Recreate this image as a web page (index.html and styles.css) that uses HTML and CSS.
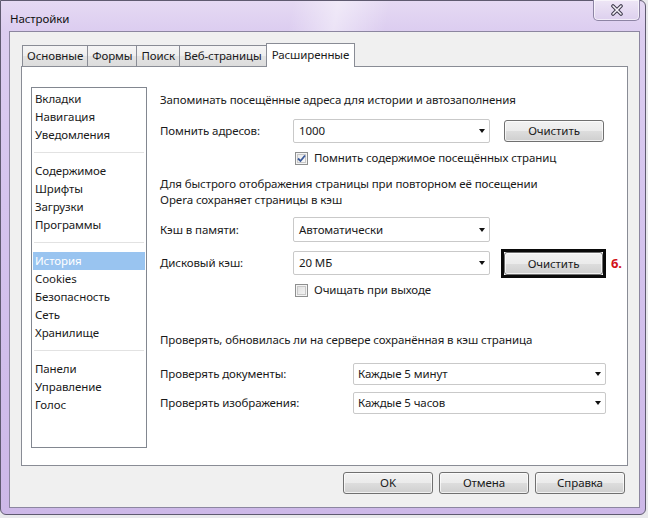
FILE: index.html
```html
<!DOCTYPE html>
<html lang="ru">
<head>
  <meta charset="UTF-8" />
  <meta name="viewport" content="width=device-width, initial-scale=1.0"/>
  <title>Настройки</title>
  <link rel="stylesheet" href="styles.css">
</head>
<body>
  <div class="window">
    <div class="titlebar">
      <span class="title">Настройки</span>
      <div class="close">
        <svg width="14" height="12" viewBox="0 0 14 12">
          <path d="M3 2 L11 10 M11 2 L3 10" stroke="#3e3a4c" stroke-width="3.6" stroke-linecap="round"/>
          <path d="M3 2 L11 10 M11 2 L3 10" stroke="#f6f3fa" stroke-width="1.6" stroke-linecap="round"/>
        </svg>
      </div>
    </div>

    <div class="client">
      <div class="tabs">
        <div class="tab">Основные</div>
        <div class="tab">Формы</div>
        <div class="tab">Поиск</div>
        <div class="tab">Веб-страницы</div>
        <div class="tab active">Расширенные</div>
      </div>

      <div class="panel">
        <ul class="nav">
          <li>Вкладки</li>
          <li>Навигация</li>
          <li>Уведомления</li>
          <li class="sep"></li>
          <li>Содержимое</li>
          <li>Шрифты</li>
          <li>Загрузки</li>
          <li>Программы</li>
          <li class="sep"></li>
          <li class="selected">История</li>
          <li>Cookies</li>
          <li>Безопасность</li>
          <li>Сеть</li>
          <li>Хранилище</li>
          <li class="sep"></li>
          <li>Панели</li>
          <li>Управление</li>
          <li>Голос</li>
        </ul>

        <div class="content">
          <div class="text">Запоминать посещённые адреса для истории и автозаполнения</div>

          <div class="row row-first">
            <div class="label">Помнить адресов:</div>
            <div class="combo"><span>1000</span><i class="arrow"></i></div>
            <div class="btn btn-side">Очистить</div>
          </div>

          <div class="check-row check-first">
            <span class="check checked">
              <svg width="9" height="9" viewBox="0 0 9 9"><path d="M1 4.5 L3.5 7 L8 1.5" fill="none" stroke="#3b5a9a" stroke-width="1.8"/></svg>
            </span>
            <span>Помнить содержимое посещённых страниц</span>
          </div>

          <div class="text text-cache">Для быстрого отображения страницы при повторном её посещении<br>Opera сохраняет страницы в кэш</div>

          <div class="row row-mem">
            <div class="label">Кэш в памяти:</div>
            <div class="combo"><span>Автоматически</span><i class="arrow"></i></div>
          </div>

          <div class="row row-disk">
            <div class="label">Дисковый кэш:</div>
            <div class="combo"><span>20 МБ</span><i class="arrow"></i></div>
            <div class="marker"><div class="btn">Очистить</div></div>
            <span class="mark">6.</span>
          </div>

          <div class="check-row check-exit">
            <span class="check"></span>
            <span>Очищать при выходе</span>
          </div>

          <div class="text text-check">Проверять, обновилась ли на сервере сохранённая в кэш страница</div>

          <div class="row wide row-docs">
            <div class="label">Проверять документы:</div>
            <div class="combo"><span>Каждые 5 минут</span><i class="arrow"></i></div>
          </div>

          <div class="row wide row-img">
            <div class="label">Проверять изображения:</div>
            <div class="combo"><span>Каждые 5 часов</span><i class="arrow"></i></div>
          </div>
        </div>
      </div>

      <div class="footer">
        <div class="btn">OK</div>
        <div class="btn">Отмена</div>
        <div class="btn">Справка</div>
      </div>
    </div>
  </div>
</body>
</html>
```

FILE: styles.css
```css
:root {
  --text-color: #1a1a1a;
  --face-color: #f0f0f0;
  --panel-border: #898c95;
  --combo-border: #c9c9c9;
  --select-bg: #99c4f0;
  --font-family: "Noto Sans", "Open Sans", sans-serif;
}

* {
  box-sizing: border-box;
}

html, body {
  margin: 0;
  padding: 0;
  background-color: #e9e9ec;
  color: var(--text-color);
  font-family: var(--font-family);
  font-size: 11.5px;
  letter-spacing: -0.1px;
  line-height: 16px;
}

.window {
  width: 646px;
  height: 515px;
  border: 1px solid #5f5a70;
  border-radius: 0 6px 6px 6px;
  padding: 0 5px 6px 8px;
  display: flex;
  flex-direction: column;
  background:
    linear-gradient(100deg, transparent 45%, rgba(255, 255, 255, 0.45) 52%, transparent 60%) no-repeat 0 0 / 100% 30px,
    linear-gradient(to bottom, #e5d9f3 0, #dccdf0 30px, #d5c4ee 200px, #cdb8e8 100%);
}

/* title bar */
.titlebar {
  height: 30px;
  display: flex;
  justify-content: space-between;
  align-items: flex-start;
}

.title {
  margin-top: 10px;
  padding-left: 1px;
  color: #111;
}

.close {
  width: 47px;
  height: 21px;
  margin-top: -1px;
  border: 1px solid #8d84a4;
  border-top: none;
  border-radius: 0 0 5px 5px;
  background: linear-gradient(to bottom, #eee6f6, #ddd0ee);
  box-shadow: inset 0 0 0 1px rgba(255, 255, 255, 0.6);
  display: flex;
  align-items: center;
  justify-content: center;
}

/* client area */
.client {
  flex: 1;
  background-color: var(--face-color);
  border: 1px solid #8c86a0;
  padding: 11px 11px 0 11px;
}

.tabs {
  display: flex;
  align-items: flex-end;
  height: 23px;
  padding-left: 1px;
}

.tab {
  height: 21px;
  padding: 0 4px;
  border: 1px solid var(--panel-border);
  border-bottom: none;
  margin-right: -1px;
  background: linear-gradient(to bottom, #f5f5f5 0, #eeeeee 50%, #e3e3e3 51%, #dcdcdc 100%);
  line-height: 20px;
  white-space: nowrap;
}

.tab.active {
  position: relative;
  z-index: 1;
  height: 24px;
  margin-bottom: -1px;
  padding: 0 5px;
  background: #fff;
  line-height: 22px;
}

.panel {
  height: 400px;
  border: 1px solid var(--panel-border);
  background: #fff;
  display: flex;
  padding: 20px 0 0 9px;
}

/* left list */
.nav {
  list-style: none;
  margin: 0;
  width: 116px;
  height: 361px;
  border: 1px solid #828790;
  padding: 2px 1px 1px 1px;
}

.nav li {
  height: 18px;
  line-height: 18px;
  padding-left: 2px;
  white-space: nowrap;
}

.nav li.sep {
  height: 1px;
  margin: 8px 1px 9px;
  background: #e2e2e2;
}

.nav li.selected {
  background: var(--select-bg);
  color: #fff;
}

/* right side */
.content {
  margin-left: 13px;
  padding-top: 5px;
  white-space: nowrap;
}

.row {
  display: flex;
  align-items: center;
  height: 24px;
}

.label {
  width: 133px;
}

.combo {
  width: 197px;
  height: 24px;
  border: 1px solid var(--combo-border);
  border-radius: 2px;
  background: #fff;
  display: flex;
  align-items: center;
  justify-content: space-between;
  padding: 0 4px 0 5px;
}

.arrow {
  width: 0;
  height: 0;
  border-left: 3.5px solid transparent;
  border-right: 3.5px solid transparent;
  border-top: 4px solid #111;
}

.row.wide {
  height: 22px;
}

.row.wide .label {
  width: 193px;
}

.row.wide .combo {
  width: 253px;
  height: 22px;
  padding-left: 4px;
}

.btn {
  width: 90px;
  height: 22px;
  border: 1px solid #707070;
  border-radius: 3px;
  background: linear-gradient(to bottom, #f2f2f2 0, #ebebeb 50%, #dddddd 51%, #cfcfcf 100%);
  box-shadow: inset 0 0 0 1px rgba(255, 255, 255, 0.7);
  text-align: center;
  line-height: 20px;
}

.btn-side {
  width: 100px;
  margin-left: 14px;
}

.marker {
  margin-left: 11px;
  border: 3px solid #0a0a0a;
}

.marker .btn {
  width: 99px;
  height: 23px;
  line-height: 21px;
}

.mark {
  margin-left: 5px;
  color: #d2121a;
  font-weight: 700;
  font-size: 13px;
}

.check-row {
  display: flex;
  align-items: center;
  height: 14px;
  padding-left: 135px;
  gap: 6px;
}

.check {
  width: 13px;
  height: 13px;
  border: 1px solid #8e8f8f;
  background: linear-gradient(135deg, #dcdcdc, #f7f7f7);
  box-shadow: inset 0 0 0 1px #f4f4f4, inset 0 0 0 2px #c8c8c8;
  display: flex;
  align-items: center;
  justify-content: center;
}

.check.checked {
  background: linear-gradient(135deg, #e6e6e6, #fdfdfd);
}

.row-first { margin-top: 11px; }
.check-first { margin-top: 8px; }
.text-cache { margin-top: 11px; }
.row-mem { margin-top: 9px; height: 25px; }
.row-mem .combo { height: 25px; }
.row-disk { margin-top: 9px; }
.check-exit { margin-top: 8px; }
.text-check { margin-top: 35px; }
.row-docs { margin-top: 15px; }
.row-img { margin-top: 7px; }

.footer {
  display: flex;
  justify-content: flex-end;
  gap: 6px;
  margin-top: 6px;
  padding-right: 3px;
}
```
